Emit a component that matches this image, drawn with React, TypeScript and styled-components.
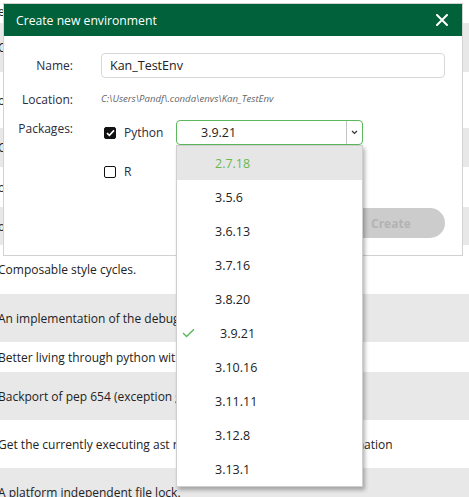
import React from "react";
import styled, { createGlobalStyle } from "styled-components";

const GlobalStyle = createGlobalStyle`
  html, body {
    margin: 0;
    padding: 0;
    background: #fff;
    overflow: hidden;
  }
  body {
    font-family: "Open Sans", "Noto Sans", sans-serif;
    color: #222;
  }
`;

const rows = [
  { h: 23, text: "e" },
  { h: 49, text: "Cross-platform colored terminal text." },
  { h: 56, text: "ocs" },
  { h: 39, text: "Cython" },
  { h: 40, text: "ompat" },
  { h: 38, text: "ontourpy" },
  { h: 49, text: "Composable style cycles." },
  { h: 48, text: "An implementation of the debug adapter protocol for python" },
  { h: 30, text: "Better living through python with decorators" },
  { h: 48, text: "Backport of pep 654 (exception groups)" },
  { h: 48, text: "Get the currently executing ast node of a frame, and other information" },
  { h: 48, text: "A platform independent file lock." },
];

const versions = [
  "2.7.18",
  "3.5.6",
  "3.6.13",
  "3.7.16",
  "3.8.20",
  "3.9.21",
  "3.10.16",
  "3.11.11",
  "3.12.8",
  "3.13.1",
];

const App: React.FC = () => {
  return (
    <Page>
      <GlobalStyle />
      <Table>
        {rows.map((r, i) => (
          <TableRow key={i} $shaded={i % 2 === 1} $h={r.h}>
            <RowText>{r.text}</RowText>
          </TableRow>
        ))}
      </Table>

      <Dialog>
        <Header>
          <Title>Create new environment</Title>
          <CloseButton aria-label="close">
            <svg width="12" height="12" viewBox="0 0 12 12">
              <path d="M1 1L11 11M11 1L1 11" stroke="#fff" strokeWidth="2" strokeLinecap="round" />
            </svg>
          </CloseButton>
        </Header>
        <Body>
          <FormGrid>
            <Label>Name:</Label>
            <NameInput defaultValue="Kan_TestEnv" />

            <Label>Location:</Label>
            <PathText>C:\Users\Pandf\.conda\envs\Kan_TestEnv</PathText>

            <Label $top>Packages:</Label>
            <Packages>
              <PackageLine>
                <CheckLabel>
                  <Box $checked>
                    <svg width="9" height="8" viewBox="0 0 9 8">
                      <path d="M1 4.2L3.4 6.4L8 1.4" stroke="#fff" strokeWidth="1.6" fill="none" />
                    </svg>
                  </Box>
                  <span>Python</span>
                </CheckLabel>
                <SelectWrap>
                  <Select>
                    <SelectValue>3.9.21</SelectValue>
                    <Chevron>
                      <svg width="7" height="5" viewBox="0 0 7 5">
                        <path d="M1 1L3.5 3.5L6 1" stroke="#333" strokeWidth="1.2" fill="none" />
                      </svg>
                    </Chevron>
                  </Select>
                  <Menu>
                    {versions.map((v, i) => (
                      <MenuItem key={v} $active={i === 0} $selected={v === "3.9.21"}>
                        {v === "3.9.21" && (
                          <TickIcon width="13" height="10" viewBox="0 0 13 10">
                            <path d="M1 5L4.6 8.6L12 1.2" stroke="#5cb85c" strokeWidth="1.4" fill="none" />
                          </TickIcon>
                        )}
                        {v}
                      </MenuItem>
                    ))}
                  </Menu>
                </SelectWrap>
              </PackageLine>
              <PackageLine $r>
                <CheckLabel>
                  <Box />
                  <span>R</span>
                </CheckLabel>
              </PackageLine>
            </Packages>
          </FormGrid>
          <Footer>
            <CreateButton disabled>Create</CreateButton>
          </Footer>
        </Body>
      </Dialog>
    </Page>
  );
};

const Page = styled.div`
  position: relative;
  width: 469px;
  height: 497px;
  overflow: hidden;
  font-size: 12px;
`;

const Table = styled.div`
  display: flex;
  flex-direction: column;
`;

const TableRow = styled.div<{ $shaded: boolean; $h: number }>`
  height: ${(p) => p.$h}px;
  background: ${(p) => (p.$shaded ? "#e8e8e8" : "#fff")};
  display: flex;
  align-items: center;
`;

const RowText = styled.span`
  margin-left: -2px;
  white-space: nowrap;
  color: #222;
  font-size: 12px;
`;

const Dialog = styled.div`
  position: absolute;
  top: 3px;
  left: 3px;
  width: 458px;
  height: 251px;
  background: #fff;
  border: 1px solid #d2d2d2;
  display: flex;
  flex-direction: column;
`;

const Header = styled.div`
  height: 32px;
  background: #00613a;
  display: flex;
  align-items: center;
  justify-content: space-between;
  padding: 0 14px 0 12px;
`;

const Title = styled.span`
  color: #fff;
  font-size: 12.2px;
`;

const CloseButton = styled.button`
  background: none;
  border: none;
  padding: 0;
  display: flex;
  cursor: pointer;
`;

const Body = styled.div`
  padding: 17px 17px 0 0;
  display: flex;
  flex-direction: column;
`;

const FormGrid = styled.div`
  display: grid;
  grid-template-columns: 69px 1fr;
  column-gap: 28px;
  row-gap: 11px;
  align-items: center;
`;

const Label = styled.label<{ $top?: boolean }>`
  text-align: right;
  font-size: 12px;
  color: #2b2b3b;
  align-self: ${(p) => (p.$top ? "start" : "center")};
  line-height: ${(p) => (p.$top ? "18px" : "normal")};
`;

const NameInput = styled.input`
  height: 25px;
  box-sizing: border-box;
  border: 1px solid #d8d8d8;
  border-radius: 4px;
  padding: 0 8px;
  font-family: inherit;
  font-size: 12.5px;
  color: #222;
  outline: none;
`;

const PathText = styled.span`
  font-style: italic;
  font-size: 9.6px;
  color: #666;
  line-height: 20px;
`;

const Packages = styled.div`
  display: flex;
  flex-direction: column;
`;

const PackageLine = styled.div<{ $r?: boolean }>`
  display: flex;
  align-items: center;
  height: 25px;
  margin-top: ${(p) => (p.$r ? "14px" : "0")};
`;

const CheckLabel = styled.div`
  width: 75px;
  display: flex;
  align-items: center;
  gap: 8px;
  padding-left: 3px;
  box-sizing: border-box;
  font-size: 12px;
  color: #2b2b3b;
`;

const Box = styled.span<{ $checked?: boolean }>`
  width: 12px;
  height: 12px;
  box-sizing: border-box;
  border-radius: 2px;
  border: 1.5px solid #111;
  background: ${(p) => (p.$checked ? "#111" : "#fff")};
  display: flex;
  align-items: center;
  justify-content: center;
`;

const SelectWrap = styled.div`
  position: relative;
  width: 187px;
`;

const Select = styled.div`
  height: 25px;
  box-sizing: border-box;
  border: 1px solid #5cb85c;
  border-radius: 4px;
  display: flex;
  align-items: center;
`;

const SelectValue = styled.span`
  flex: 1;
  padding-left: 24px;
  font-size: 12.5px;
  color: #222;
`;

const Chevron = styled.span`
  width: 15px;
  height: 100%;
  border-left: 1px solid #c4c4c4;
  display: flex;
  align-items: center;
  justify-content: center;
`;

const Menu = styled.div`
  position: absolute;
  top: 100%;
  left: 0;
  width: 187px;
  box-sizing: border-box;
  background: #fff;
  border: 1px solid #cfcfcf;
  box-shadow: 2px 3px 4px rgba(0, 0, 0, 0.3);
  z-index: 5;
`;

const MenuItem = styled.div<{ $active?: boolean; $selected?: boolean }>`
  height: 34px;
  display: flex;
  align-items: center;
  padding-left: ${(p) => (p.$selected ? "5px" : "38px")};
  background: ${(p) => (p.$active ? "#e6e6e6" : "#fff")};
  color: ${(p) => (p.$active ? "#6ab84e" : "#222")};
  font-size: 12.5px;
`;

const TickIcon = styled.svg`
  margin-right: 25px;
`;

const Footer = styled.div`
  display: flex;
  justify-content: flex-end;
  margin-top: 24px;
`;

const CreateButton = styled.button`
  width: 96px;
  height: 30px;
  border: none;
  border-radius: 15px;
  background: #cccccc;
  color: #b3b3b3;
  font-family: inherit;
  font-weight: 700;
  font-size: 12px;
  text-align: left;
  padding-left: 22px;
`;

export default App;
